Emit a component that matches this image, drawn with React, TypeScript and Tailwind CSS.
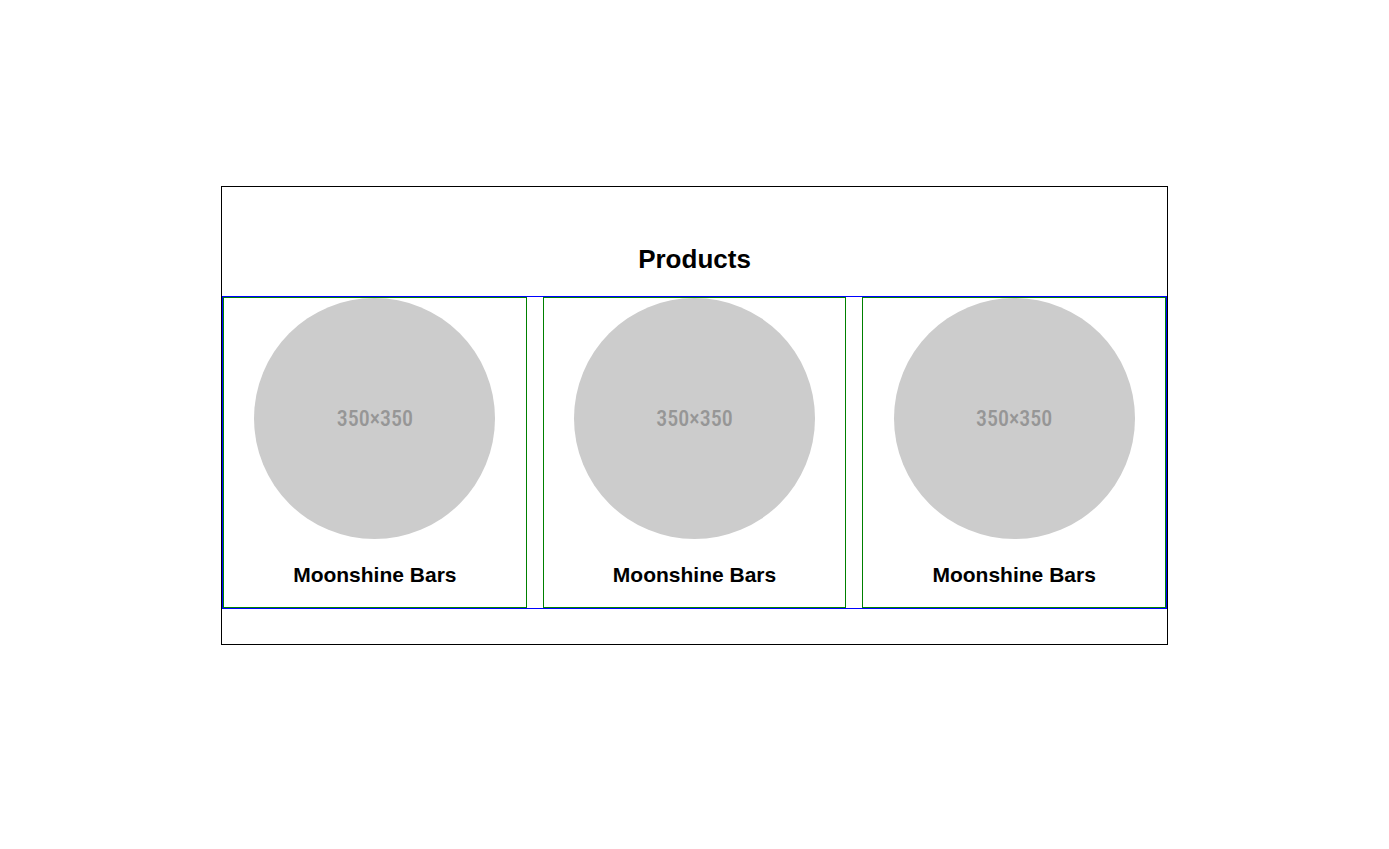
const products = [
  { id: 1, name: "Moonshine Bars" },
  { id: 2, name: "Moonshine Bars" },
  { id: 3, name: "Moonshine Bars" },
];

function ProductCard({ name }: { name: string }) {
  return (
    <article className="flex flex-col items-center gap-6 border border-[#008000] pb-5">
      <div className="flex aspect-square w-4/5 items-center justify-center rounded-full bg-[#cccccc] font-['Roboto_Condensed','Roboto',sans-serif] text-[22px] font-medium text-[#969696]">
        350×350
      </div>
      <h3 className="text-[21px] leading-6 font-bold">{name}</h3>
    </article>
  );
}

export default function App() {
  return (
    <main className="min-h-screen bg-white px-6 py-[186px] font-['Liberation_Sans',Arial,sans-serif] text-black">
      <section className="mx-auto w-full max-w-[947px] border border-black pt-[58px] pb-[35px]">
        <h2 className="mb-[23px] text-center text-[26px] leading-7 font-bold">Products</h2>
        <div className="grid grid-cols-3 gap-4 border border-[#0000ff]">
          {products.map((product) => (
            <ProductCard key={product.id} name={product.name} />
          ))}
        </div>
      </section>
    </main>
  );
}
